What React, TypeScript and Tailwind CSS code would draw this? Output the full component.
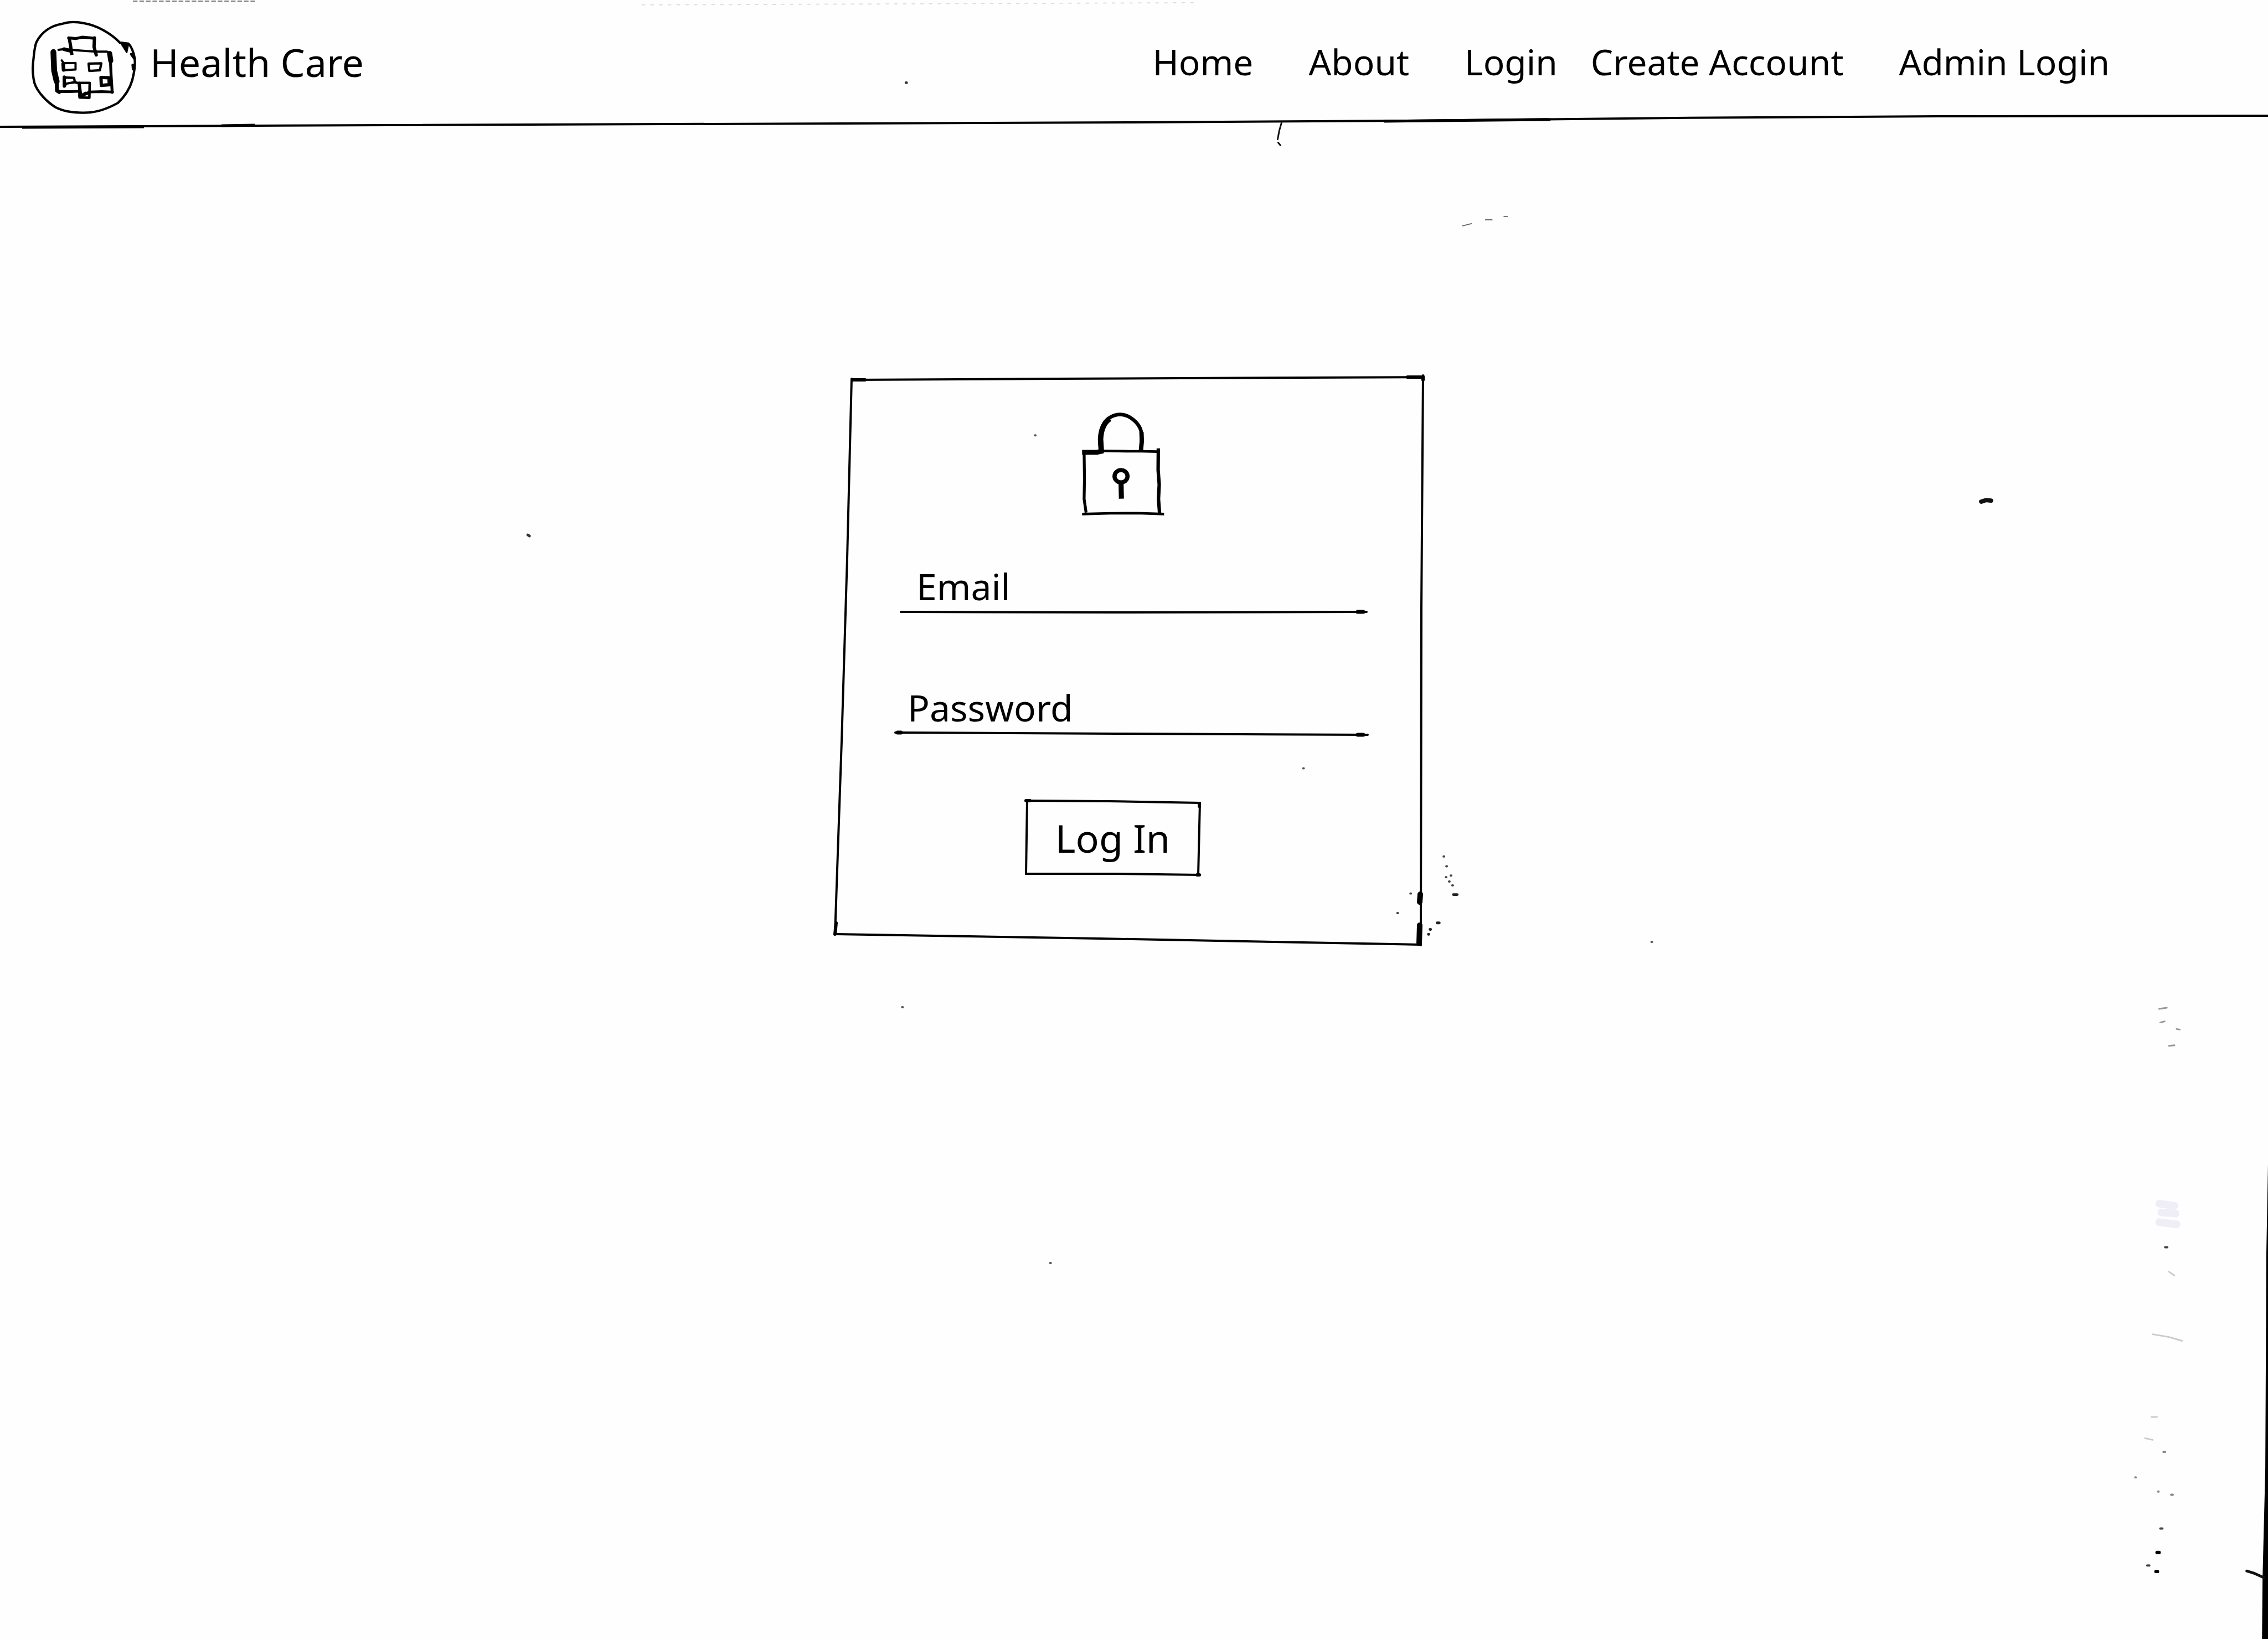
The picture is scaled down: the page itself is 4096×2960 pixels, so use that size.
import React from "react";

function HospitalLogo() {
  return (
    <svg
      viewBox="75 45 600 540"
      className="mt-[22px] h-[177px] w-[197px] shrink-0"
      fill="none"
      stroke="#000"
      strokeWidth="13"
      strokeLinejoin="round"
      strokeLinecap="round"
      aria-hidden="true"
    >
      <path d="M618 182 L570 176 C520 124 440 80 375 70 C330 60 290 60 255 72 C190 82 140 118 112 170 C98 200 98 240 92 285 C88 330 92 370 100 400 C116 448 165 500 215 532 C265 558 330 564 388 562 C450 560 510 536 560 508 C600 470 625 430 638 385 C650 340 656 300 652 262 C646 230 634 198 618 182 Z" />
      <path d="M575 178 L618 182 L608 230 Z" fill="#000" strokeWidth="8" />
      <path d="M634 240 L650 262 M642 300 L644 322" strokeWidth="16" />
      <path d="M290 144 L298 190 L306 244" strokeWidth="18" strokeLinecap="butt" />
      <path d="M288 150 L325 154 L365 146 L430 152" strokeWidth="16" />
      <path d="M430 150 L428 200 L440 244" strokeWidth="18" />
      <path d="M232 216 L262 212 L300 216 L380 222 L440 226 L500 226 L514 236" strokeWidth="12" />
      <path d="M262 212 L300 222" strokeWidth="20" />
      <path d="M204 228 L208 330 L222 390" strokeWidth="32" />
      <path d="M222 390 L224 440 L236 448" strokeWidth="22" />
      <path d="M514 236 L520 276" strokeWidth="28" />
      <path d="M518 270 L522 360 L528 450" strokeWidth="16" />
      <path d="M228 446 L290 446 L350 444 M400 448 L470 446 L530 448" strokeWidth="15" />
      <path d="M250 274 L262 290 M256 290 L326 288 L326 324 L262 328 L256 290" strokeWidth="12" />
      <path d="M258 294 L260 326" strokeWidth="20" />
      <path d="M398 292 L468 290 L460 328 L402 332 Z" strokeWidth="13" />
      <path d="M262 368 L318 370 L322 394 L276 402 L264 416 Z" strokeWidth="13" />
      <path d="M264 366 L264 416" strokeWidth="18" />
      <path d="M466 368 L510 370 L512 408 L468 412 Z" strokeWidth="18" />
      <path d="M322 394 L350 402 M346 398 L404 398 L402 480 L348 478 Z" strokeWidth="14" />
      <path d="M346 400 L354 470 M350 470 L398 452 M352 474 L380 456" strokeWidth="18" />
    </svg>
  );
}

function Padlock() {
  return (
    <svg
      viewBox="140 80 462 570"
      className="mr-[30px] h-[187px] w-[151px] self-center"
      fill="none"
      stroke="#000"
      strokeWidth="16"
      strokeLinejoin="round"
      aria-hidden="true"
    >
      <path d="M247 296 L242 240 C242 180 262 130 300 108 C350 80 400 92 440 134 C462 156 472 180 472 205 L470 300" strokeWidth="20" />
      <path d="M250 295 L246 230 C248 180 262 140 297 116" strokeWidth="30" />
      <path d="M472 190 L474 240 L468 300" strokeWidth="24" />
      <path d="M144 302 L225 302 L262 294" strokeWidth="27" />
      <path d="M250 294 L400 296 L470 296 L565 298" strokeWidth="14" />
      <path d="M565 280 L564 400 L570 480 L566 560 L572 640" strokeWidth="19" />
      <path d="M155 300 L157 450 L155 560 L166 635" strokeWidth="16" />
      <path d="M144 643 L300 639 L450 638 L597 643" strokeWidth="14" />
      <ellipse cx="359" cy="434" rx="36" ry="34" strokeWidth="23" />
      <path d="M359 465 L361 558" strokeWidth="28" />
    </svg>
  );
}

/* Hand-ruled outline of the login card */
function CardOutline() {
  return (
    <svg
      viewBox="0 0 1066 1028"
      preserveAspectRatio="none"
      className="pointer-events-none absolute inset-0 h-full w-full overflow-visible"
      fill="none"
      stroke="#000"
      strokeLinecap="round"
      aria-hidden="true"
    >
      <path d="M32 6 L24 330 L14 660 L2 1008" strokeWidth="4" />
      <path d="M32 8 L400 6 L1064 3" strokeWidth="4" />
      <path d="M1064 0 L1061 420 L1060 1028" strokeWidth="4" />
      <path d="M2 1008 L480 1016 L1058 1027" strokeWidth="4" />
      <path d="M34 8 L56 8 M1036 3 L1064 3 M1064 2 L1064 8 M4 988 L2 1008" strokeWidth="6" />
      <path d="M1059 936 L1058 950 M1058 992 L1057 1024" strokeWidth="10" />
    </svg>
  );
}

function ButtonOutline() {
  return (
    <svg
      viewBox="0 0 316 138"
      preserveAspectRatio="none"
      className="pointer-events-none absolute inset-0 h-full w-full overflow-visible"
      fill="none"
      stroke="#000"
      strokeWidth="4"
      strokeLinecap="round"
      aria-hidden="true"
    >
      <path d="M1 2 L150 3 L315 6 L312 136" />
      <path d="M3 2 L1 134 L160 134 L315 136" />
      <path d="M1 2 L8 2 M314 7 L314 12 M310 136 L314 136" strokeWidth="6" />
    </svg>
  );
}

type FieldProps = {
  id: string;
  label: string;
  type: string;
  indent: string;
  line: string;
  ends: string;
};

function Field({ id, label, type, indent, line, ends }: FieldProps) {
  return (
    <div className="w-full">
      <div className={`flex items-center gap-4 ${indent}`}>
        <label htmlFor={id}>{label}</label>
        <input
          id={id}
          type={type}
          className="h-[80px] min-w-0 flex-1 bg-transparent outline-none"
        />
      </div>
      <svg
        viewBox="0 0 858 16"
        preserveAspectRatio="none"
        className="block h-[16px] w-full"
        fill="none"
        stroke="#000"
        strokeLinecap="round"
        aria-hidden="true"
      >
        <path d={line} strokeWidth="4" />
        <path d={ends} strokeWidth="7" />
      </svg>
    </div>
  );
}

/* Pen and scanner marks scattered over the sheet */
function PaperMarks() {
  return (
    <svg
      viewBox="0 0 4168 3012"
      preserveAspectRatio="none"
      className="pointer-events-none absolute inset-0 h-full w-full"
      fill="none"
      stroke="#111"
      strokeLinecap="round"
      aria-hidden="true"
    >
      <path d="M4168 2140 L4165 2300 L4163 2700 L4158 2900 L4157 3012 L4168 3012 Z" fill="#000" stroke="none" />
      <path d="M4129 2887 L4142 2891 L4160 2899" strokeWidth="5" />
      <path d="M2355 226 L2351 240 L2348 256 M2349 262 L2353 267" strokeWidth="3" />
      <path d="M3641 922 L3650 919 L3659 920" strokeWidth="8" />
      <path d="M2688 415 L2704 411 M2730 404 L2742 404 M2764 398 L2770 398" stroke="#666" strokeWidth="2" />
      <path d="M245 2 L470 2" stroke="#777" strokeWidth="2" strokeDasharray="7 5" />
      <path d="M1180 9 L2200 5" stroke="#ddd" strokeWidth="2" strokeDasharray="5 11" />
      <path d="M970 983 L973 985 M1665 152 L1666 152" stroke="#333" strokeWidth="5" />
      <path d="M1902 800 h1 M2395 1412 h1 M3035 1731 h1 M1930 2321 h1 M1658 1851 h1" stroke="#555" strokeWidth="4" />
      <path d="M2653 1574 h1 M2658 1592 h1 M2657 1612 h1 M2663 1620 h1 M2666 1609 h1 M2669 1627 h1 M2592 1642 h1 M2568 1678 h1" stroke="#444" strokeWidth="4" />
      <path d="M2671 1644 h7 M2641 1696 h4 M2628 1708 h1 M2625 1717 h1" stroke="#222" strokeWidth="5" />
      <path d="M3968 1854 L3982 1852 M3970 1879 L3978 1877 M3986 1922 L3996 1921 M4000 1891 L4006 1892" stroke="#999" strokeWidth="3" />
      <path d="M3968 2212 L3996 2216 M3972 2228 L3998 2230 M3968 2246 L4000 2250" stroke="#efedf6" strokeWidth="14" />
      <path d="M3986 2337 L3996 2344 M3956 2452 L3986 2457 L4010 2464 M3942 2643 L3956 2646 M3954 2604 L3964 2604" stroke="#c8ccd0" strokeWidth="3" />
      <path d="M3979 2292 h4 M3970 2809 h4 M3946 2877 h4" stroke="#444" strokeWidth="4" />
      <path d="M3964 2853 h4 M3962 2888 h3" stroke="#000" strokeWidth="6" />
      <path d="M3924 2715 h1 M3966 2741 h1 M3976 2668 h3 M3990 2747 h3" stroke="#888" strokeWidth="4" />
    </svg>
  );
}

export default function App() {
  return (
    <div className="relative min-h-screen overflow-hidden bg-[#fefefe] font-['Noto_Sans',sans-serif] text-[64px] leading-[80px] text-black">
      <header className="relative flex items-center justify-between pt-[12px] pr-[286px] pb-[23px] pl-[54px]">
        <a href="#" className="flex items-center gap-5 text-[70px]">
          <HospitalLogo />
          <span>Health Care</span>
        </a>
        <nav className="flex items-center gap-[100px]">
          <a href="#home">Home</a>
          <a href="#about">About</a>
          <div className="flex items-center gap-[60px]">
            <a href="#login">Login</a>
            <a href="#create-account">Create Account</a>
          </div>
          <a href="#admin-login">Admin Login</a>
        </nav>
        <svg
          viewBox="0 0 4096 32"
          preserveAspectRatio="none"
          className="pointer-events-none absolute inset-x-0 bottom-0 h-[32px] w-full"
          fill="none"
          stroke="#000"
          aria-hidden="true"
        >
          <path d="M0 27 L700 24 L2044 19 L2540 16 L3026 11 L3500 8 L4096 7" strokeWidth="4" />
          <path d="M40 28 L260 27 M400 25 L460 24 M2500 17 L2800 14" strokeWidth="5" />
        </svg>
      </header>

      <main className="flex justify-center pt-[444px] pr-[18px]">
        <form
          className="relative flex w-[1066px] flex-col pt-[66px] pr-[100px] pb-[125px] pl-[109px]"
          onSubmit={(e: React.FormEvent) => e.preventDefault()}
        >
          <CardOutline />
          <Padlock />
          <div className="mt-[87px] flex flex-col gap-[123px] text-[66px]">
            <Field
              id="email"
              label="Email"
              type="email"
              indent="pl-[40px]"
              line="M12 7 L400 8 L854 7"
              ends="M838 7 L848 7"
            />
            <Field
              id="password"
              label="Password"
              type="password"
              indent="pl-[24px]"
              line="M2 6 L400 8 L856 10"
              ends="M6 6 L12 6 M838 10 L848 10"
            />
          </div>
          <button
            type="submit"
            className="relative mt-[111px] mr-[68px] h-[138px] w-[316px] self-center text-[70px]"
          >
            <ButtonOutline />
            Log In
          </button>
        </form>
      </main>

      <PaperMarks />
    </div>
  );
}
